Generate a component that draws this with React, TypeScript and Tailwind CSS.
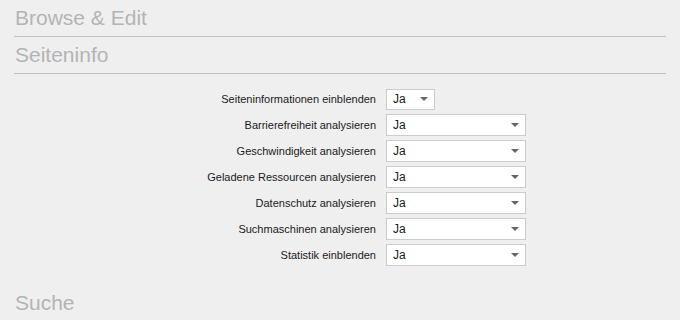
const rows: { label: string; small?: boolean }[] = [
  { label: 'Seiteninformationen einblenden', small: true },
  { label: 'Barrierefreiheit analysieren' },
  { label: 'Geschwindigkeit analysieren' },
  { label: 'Geladene Ressourcen analysieren' },
  { label: 'Datenschutz analysieren' },
  { label: 'Suchmaschinen analysieren' },
  { label: 'Statistik einblenden' },
];

function SectionHeader({ title, divider = true }: { title: string; divider?: boolean }) {
  return (
    <h2
      className={`mx-[14px] pt-[6px] pb-[6px] pl-px text-[21px] leading-[24px] text-[#b4b4b4] ${
        divider ? 'border-b border-[#c2c2c2]' : ''
      }`}
    >
      {title}
    </h2>
  );
}

function FakeSelect({ small }: { small?: boolean }) {
  return (
    <div
      className={`flex items-center justify-between border border-[#cccccc] bg-white pl-[6px] pr-[6px] text-[12px] text-[#1a1a1a] ${
        small ? 'h-[21px] w-[49px]' : 'h-[22px] w-[140px]'
      }`}
    >
      <span>Ja</span>
      <span className="h-0 w-0 border-x-[4px] border-t-[4px] border-x-transparent border-t-[#666]" />
    </div>
  );
}

export default function App() {
  return (
    <div
      className="h-[320px] w-[680px] overflow-hidden bg-[#efefef]"
      style={{ fontFamily: '"Liberation Sans", Arial, sans-serif' }}
    >
      <SectionHeader title="Browse & Edit" />
      <SectionHeader title="Seiteninfo" />

      <div className="mt-[12px] ml-[196px] flex flex-col">
        {rows.map((row) => (
          <div key={row.label} className="flex h-[26px] items-center">
            <label className="w-[180px] whitespace-nowrap text-right text-[11px] text-[#1a1a1a]">
              {row.label}
            </label>
            <div className="ml-[10px]">
              <FakeSelect small={row.small} />
            </div>
          </div>
        ))}
      </div>

      <div className="mt-[17px]">
        <SectionHeader title="Suche" divider={false} />
      </div>
    </div>
  );
}
